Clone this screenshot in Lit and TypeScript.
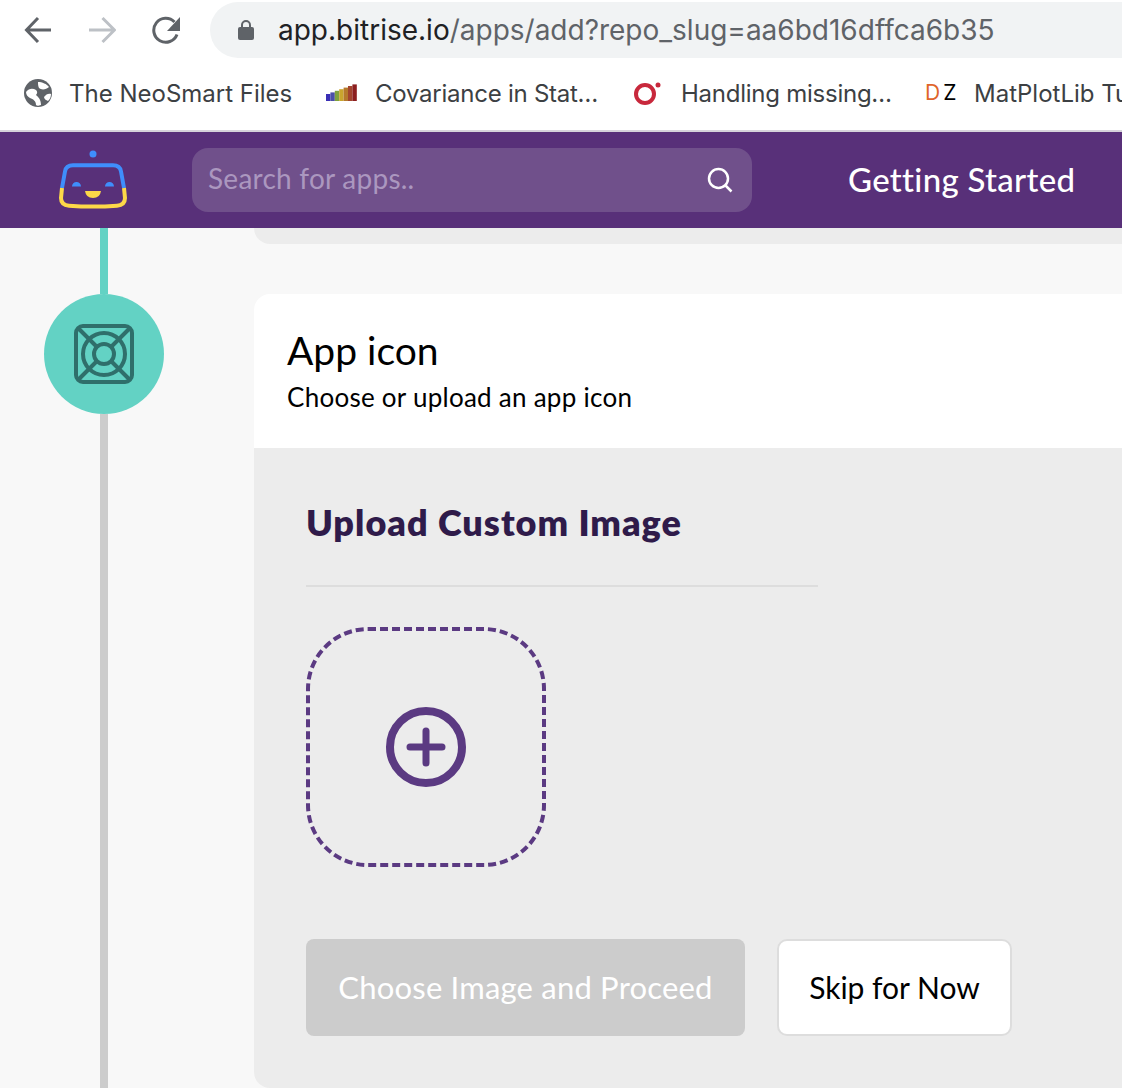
import { LitElement, html, css, svg } from 'lit';
import { customElement } from 'lit/decorators.js';

const bookmarks = [
  { name: 'The NeoSmart Files', icon: 'globe', width: 302, cut: false },
  { name: 'Covariance in Stat…', icon: 'bars', width: 308, cut: true },
  { name: 'Handling missing…', icon: 'ring', width: 291, cut: true },
  { name: 'MatPlotLib Tutorial', icon: 'dz', width: 200, cut: false },
];

const bookmarkIcon = (kind: string) => {
  if (kind === 'globe') {
    return html`<svg class="bm-icon" width="28" height="28" viewBox="0 0 28 28">
      <circle cx="14" cy="14" r="14" fill="#5f6368"></circle>
      <path d="M14 3C18 3 23 5 25 8 22 11 17 11 15 9 14 7 14 5 14 3zM2 13C5 9 9 9 12 11 14 13 13 15 12 16 14 18 17 20 17 26 14 27 13 27 12 26 12 22 9 20 6 19 4 18 2 16 2 13zM20 18C22 15 25 14 27 15 27 18 26 20 24 22 22 21 20 20 20 18z" fill="#fff"></path>
    </svg>`;
  }
  if (kind === 'bars') {
    const cols = ['#3a2fb5', '#4b4fa8', '#7fa23c', '#c9a52e', '#b5792c', '#a3452e', '#8c1f1f'];
    return html`<svg class="bm-icon" width="32" height="18" viewBox="0 0 32 18">
      ${cols.map((c, i) => svg`<rect x=${i * 4.4} y=${10 - i * 1.6} width="4.4" height=${7 + i * 1.6} fill=${c}></rect>`)}
    </svg>`;
  }
  if (kind === 'ring') {
    return html`<svg class="bm-icon" width="30" height="26" viewBox="0 0 30 26">
      <circle cx="11" cy="14" r="9" fill="none" stroke="#c8283c" stroke-width="4"></circle>
      <circle cx="24" cy="5" r="2.500" fill="#c8283c"></circle>
    </svg>`;
  }
  return html`<span class="dz"><span class="d">D</span><span>Z</span></span>`;
};

@customElement('app-root')
export class AppRoot extends LitElement {
  static styles = css`
    :host {
      display: block;
      width: 1122px;
      height: 1088px;
      overflow: hidden;
      background: #f8f8f8;
      font-family: 'Lato', 'Liberation Sans', sans-serif;
    }
    .chrome {
      height: 130px;
      background: #fff;
      border-bottom: 2px solid #d5d2da;
    }
    .toolbar {
      display: flex;
      height: 62px;
      align-items: flex-start;
    }
    .nav-icons {
      width: 210px;
      flex: none;
      display: flex;
      align-items: center;
      height: 60px;
      padding-left: 24px;
      gap: 36px;
      box-sizing: border-box;
    }
    .url {
      flex: 1;
      margin-top: 2px;
      height: 56px;
      border-radius: 28px 0 0 28px;
      background: #f1f3f4;
      display: flex;
      align-items: center;
      padding-left: 28px;
      gap: 24px;
      font-family: 'Inter', 'Liberation Sans', sans-serif;
      font-size: 28px;
      white-space: nowrap;
      overflow: hidden;
      color: #5f6368;
    }
    .url b {
      font-weight: 400;
      color: #202124;
    }
    .bookmarks {
      display: flex;
      align-items: center;
      height: 62px;
      padding-left: 24px;
      font-family: 'Inter', 'Liberation Sans', sans-serif;
      font-size: 24px;
      color: #3c4043;
      white-space: nowrap;
    }
    .bm {
      display: flex;
      flex: none;
      align-items: center;
      gap: 17px;
    }
    .bm.cut {
      letter-spacing: -0.25px;
    }
    .bm-icon {
      flex: none;
    }
    .dz {
      width: 32px;
      flex: none;
      display: flex;
      gap: 3px;
      font-size: 21px;
      font-weight: 400;
      line-height: 24px;
      color: #000;
    }
    .dz .d {
      color: #e0652a;
    }
    .topbar {
      height: 96px;
      background: #583079;
      display: flex;
      align-items: center;
      padding-left: 58px;
    }
    .search {
      width: 560px;
      height: 64px;
      margin-left: 64px;
      border-radius: 16px;
      background: #70508b;
      display: flex;
      align-items: center;
      justify-content: space-between;
      padding: 0 18px 0 16px;
      box-sizing: border-box;
      font-size: 28px;
      letter-spacing: 0.25px;
      color: #ab97bf;
    }
    .search span {
      position: relative;
      top: -2px;
    }
    .started {
      margin-left: 96px;
      margin-top: -2px;
      font-size: 33px;
      font-weight: 500;
      letter-spacing: 0.3px;
      color: #fff;
      white-space: nowrap;
    }
    .page {
      display: grid;
      grid-template-columns: 254px 1fr;
    }
    .rail {
      height: 860px;
      display: flex;
      flex-direction: column;
      align-items: center;
      padding-right: 46px;
    }
    .line-done {
      width: 8px;
      height: 66px;
      background: #63d2c4;
    }
    .step {
      width: 120px;
      height: 120px;
      flex: none;
      border-radius: 50%;
      background: #63d2c4;
      display: flex;
      align-items: center;
      justify-content: center;
    }
    .line-todo {
      width: 8px;
      flex: 1;
      background: #cccccc;
    }
    .prev {
      height: 16px;
      background: #ececec;
      border-radius: 0 0 0 16px;
      margin-bottom: 50px;
    }
    .head {
      background: #fff;
      height: 154px;
      border-radius: 16px 0 0 0;
      padding: 31px 0 0 33px;
      box-sizing: border-box;
      color: #000;
    }
    .head h2 {
      margin: 0;
      font-size: 39px;
      line-height: 50px;
      font-weight: 400;
    }
    .head p {
      margin: 2px 0 0;
      font-size: 26px;
      line-height: 40px;
      letter-spacing: 0.26px;
    }
    .body {
      height: 640px;
      background: #ececec;
      border-radius: 0 0 0 16px;
      padding: 49px 0 0 52px;
      box-sizing: border-box;
    }
    .body h3 {
      margin: 0;
      width: 512px;
      height: 90px;
      box-sizing: border-box;
      border-bottom: 2px solid #dddddd;
      font-size: 36px;
      line-height: 50px;
      font-weight: 800;
      letter-spacing: 1px;
      color: #2f1b4a;
      white-space: nowrap;
    }
    .drop {
      display: block;
      margin-top: 40px;
    }
    .actions {
      display: flex;
      gap: 32px;
      margin-top: 72px;
    }
    .btn {
      height: 97px;
      box-sizing: border-box;
      border-radius: 8px;
      display: flex;
      align-items: center;
      justify-content: center;
      padding-bottom: 2px;
      white-space: nowrap;
    }
    .primary {
      width: 439px;
      background: #cccccc;
      color: #fff;
      font-size: 31px;
      letter-spacing: 0.2px;
    }
    .secondary {
      width: 235px;
      background: #fff;
      border: 2px solid #dddddd;
      border-radius: 10px;
      color: #000;
      font-size: 30px;
    }
  `;

  render() {
    return html`
      <div class="chrome">
        <div class="toolbar">
          <div class="nav-icons">
            <svg width="28" height="28" viewBox="0 0 28 28" fill="none" stroke="#5f6368" stroke-width="3">
              <path d="M27 14H3M14 2 2.500 14 14 26"></path>
            </svg>
            <svg width="28" height="28" viewBox="0 0 28 28" fill="none" stroke="#bdc1c6" stroke-width="3">
              <path d="M1 14h25M14.500 2l12 12-12 12"></path>
            </svg>
            <svg width="28" height="28" viewBox="0 0 28 28" fill="none">
              <path d="M25 18.500A12 12 0 1 1 22.500 6" stroke="#5f6368" stroke-width="3"></path>
              <path d="M28 1v14H15z" fill="#5f6368"></path>
            </svg>
          </div>
          <div class="url">
            <svg width="16" height="22" viewBox="0 0 16 22">
              <path d="M4 9V6a4 4 0 0 1 8 0v3" fill="none" stroke="#5f6368" stroke-width="2"></path>
              <rect y="8" width="16" height="13" rx="2" fill="#5f6368"></rect>
            </svg>
            <span><b>app.bitrise.io</b>/apps/add?repo_slug=aa6bd16dffca6b35</span>
          </div>
        </div>
        <div class="bookmarks">
          ${bookmarks.map(
            (b) => html`<div class="bm ${b.cut ? 'cut' : ''}" style="width:${b.width}px">${bookmarkIcon(b.icon)}<span>${b.name}</span></div>`
          )}
        </div>
      </div>

      <div class="topbar">
        <svg width="70" height="60" viewBox="0 0 70 60">
          <circle cx="35" cy="4" r="3.500" fill="#3f8efc"></circle>
          <path d="M4 38 7 21.500Q8 15.300 15 15.300H55Q62 15.300 63 21.500L66 38" fill="none" stroke="#3f8efc" stroke-width="4"></path>
          <path d="M4 38 3 48Q3 55 11 55.700Q35 57.500 59 55.700Q67 55 67 48L66 38" fill="none" stroke="#fdd848" stroke-width="4"></path>
          <path d="M14 36.500a4.500 4.500 0 0 1 9 0zM47 36.500a4.500 4.500 0 0 1 9 0z" fill="#3f8efc"></path>
          <path d="M27 41H43Q42 48 35 48Q28 48 27 41z" fill="#fdd848"></path>
        </svg>
        <div class="search">
          <span>Search for apps..</span>
          <svg width="28" height="28" viewBox="0 0 28 28" fill="none" stroke="#fff" stroke-width="2.500">
            <circle cx="12.500" cy="12.500" r="9.500"></circle>
            <path d="m19.500 19.500 6 6"></path>
          </svg>
        </div>
        <div class="started">Getting Started</div>
      </div>

      <div class="page">
        <div class="rail">
          <div class="line-done"></div>
          <div class="step">
            <svg width="60" height="60" viewBox="0 0 60 60" fill="none" stroke="#2f6f6b" stroke-width="4">
              <rect x="2" y="2" width="56" height="56" rx="7"></rect>
              <circle cx="30" cy="30" r="21"></circle>
              <circle cx="30" cy="30" r="10"></circle>
              <path d="M4 4 23 23M56 4 37 23M4 56l19-19M56 56 37 37"></path>
            </svg>
          </div>
          <div class="line-todo"></div>
        </div>
        <div class="main">
          <div class="prev"></div>
          <div class="head">
            <h2>App icon</h2>
            <p>Choose or upload an app icon</p>
          </div>
          <div class="body">
            <h3>Upload Custom Image</h3>
            <svg class="drop" width="240" height="240" viewBox="0 0 240 240" fill="none" stroke="#5b3a82">
              <rect x="2" y="2" width="236" height="236" rx="60" stroke-width="4" stroke-dasharray="8 4"></rect>
              <circle cx="120" cy="120" r="36" stroke-width="8"></circle>
              <path d="M120 104v32M104 120h32" stroke-width="7" stroke-linecap="round"></path>
            </svg>
            <div class="actions">
              <div class="btn primary">Choose Image and Proceed</div>
              <div class="btn secondary">Skip for Now</div>
            </div>
          </div>
        </div>
      </div>
    `;
  }
}
